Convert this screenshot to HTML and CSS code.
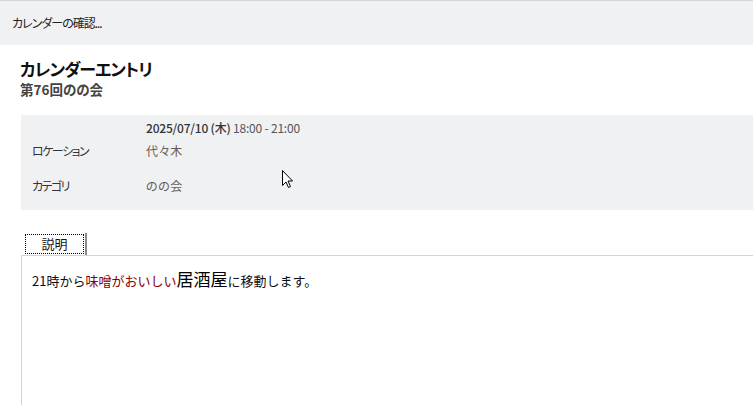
FILE: index.html
```html
<!DOCTYPE html>
<html lang="ja">
<head>
    <meta charset="UTF-8">
    <meta name="viewport" content="width=device-width, initial-scale=1.0">
    <title>カレンダーの確認</title>
    <link rel="stylesheet" href="styles.css">
</head>
<body>

    <!-- タイトルバー -->
    <div class="titlebar">カレンダーの確認...</div>

    <div class="content">
        <div class="heading">
            <h1>カレンダーエントリ</h1>
            <h2>第76回のの会</h2>
        </div>

        <!-- 詳細 -->
        <div class="details">
            <div class="row">
                <div class="label"></div>
                <div class="value date"><b>2025/07/10 (木)</b> 18:00 - 21:00</div>
            </div>
            <div class="row">
                <div class="label">ロケーション</div>
                <div class="value">代々木</div>
            </div>
            <div class="row">
                <div class="label">カテゴリ</div>
                <div class="value">のの会</div>
            </div>
            <svg class="cursor" width="12" height="19" viewBox="0 0 12 19">
                <path d="M0.5 0.5 L0.5 15.5 L4 12 L6.5 17.5 L8.5 16.5 L6 11 L10.5 11 Z" fill="#fff" stroke="#000" stroke-width="1"/>
            </svg>
        </div>

        <!-- タブ -->
        <div class="tabs">
            <div class="tab"><span>説明</span></div>
        </div>
        <div class="panel">
            <p>21時から<span class="red">味噌がおいしい</span><span class="big">居酒屋</span>に移動します。</p>
        </div>
    </div>

</body>
</html>
```

FILE: styles.css
```css
body {
    margin: 0;
    font-family: "Noto Sans CJK JP", "Noto Sans", sans-serif;
    font-feature-settings: "palt";
    color: #222;
    background: #fff;
    height: 405px;
    overflow: hidden;
}

.titlebar {
    height: 44px;
    border-top: 1px solid #d6d6d8;
    background: #f0f1f3;
    font-size: 12px;
    line-height: 44px;
    padding-left: 12px;
    letter-spacing: -1px;
    color: #222;
}

.content {
    padding-left: 21px;
}

.heading {
    padding: 14px 0 0 0;
    height: 56px;
    box-sizing: border-box;
}

h1 {
    margin: 0 0 0 -1px;
    font-size: 17px;
    line-height: 20px;
    font-weight: bold;
    letter-spacing: -1px;
    color: #111;
}

h2 {
    margin: 2px 0 0 -1px;
    font-size: 13.5px;
    line-height: 16px;
    font-weight: bold;
    color: #444;
}

.details {
    position: relative;
    background: #f0f1f3;
    height: 95px;
    padding-top: 1px;
    box-sizing: border-box;
    font-size: 12px;
    margin-top: 14px;
}

.row {
    display: flex;
    height: 23px;
    align-items: center;
}

.row + .row + .row {
    margin-top: 12px;
}

.label {
    width: 114px;
    padding-left: 11px;
    letter-spacing: -1.5px;
    color: #333;
}

.value {
    color: #6a5a52;
    letter-spacing: 0.5px;
}

.date {
    color: #555;
    letter-spacing: -0.2px;
}

.date b {
    font-weight: 500;
    color: #333;
}

.cursor {
    position: absolute;
    left: 261px;
    top: 55px;
}

.tabs {
    margin-top: 22px;
    height: 23px;
    padding-left: 3px;
    display: flex;
    align-items: flex-end;
}

.tab {
    width: 63px;
    height: 22px;
    background: #fff;
    border-right: 2px solid #8a8a8a;
    box-sizing: border-box;
    padding: 1px;
}

.tab span {
    display: block;
    height: 18px;
    border: 1px dotted #000;
    font-size: 13px;
    line-height: 18px;
    text-align: center;
    color: #111;
}

.panel {
    border-top: 1px solid #d4d4d4;
    border-left: 1px solid #d4d4d4;
    height: 160px;
}

.panel p {
    margin: 10px 0 0 10px;
    font-size: 13px;
    line-height: 26px;
    font-feature-settings: normal;
    color: #111;
}

.red {
    color: #8b0000;
}

.big {
    font-size: 17px;
    color: #000;
}
```
